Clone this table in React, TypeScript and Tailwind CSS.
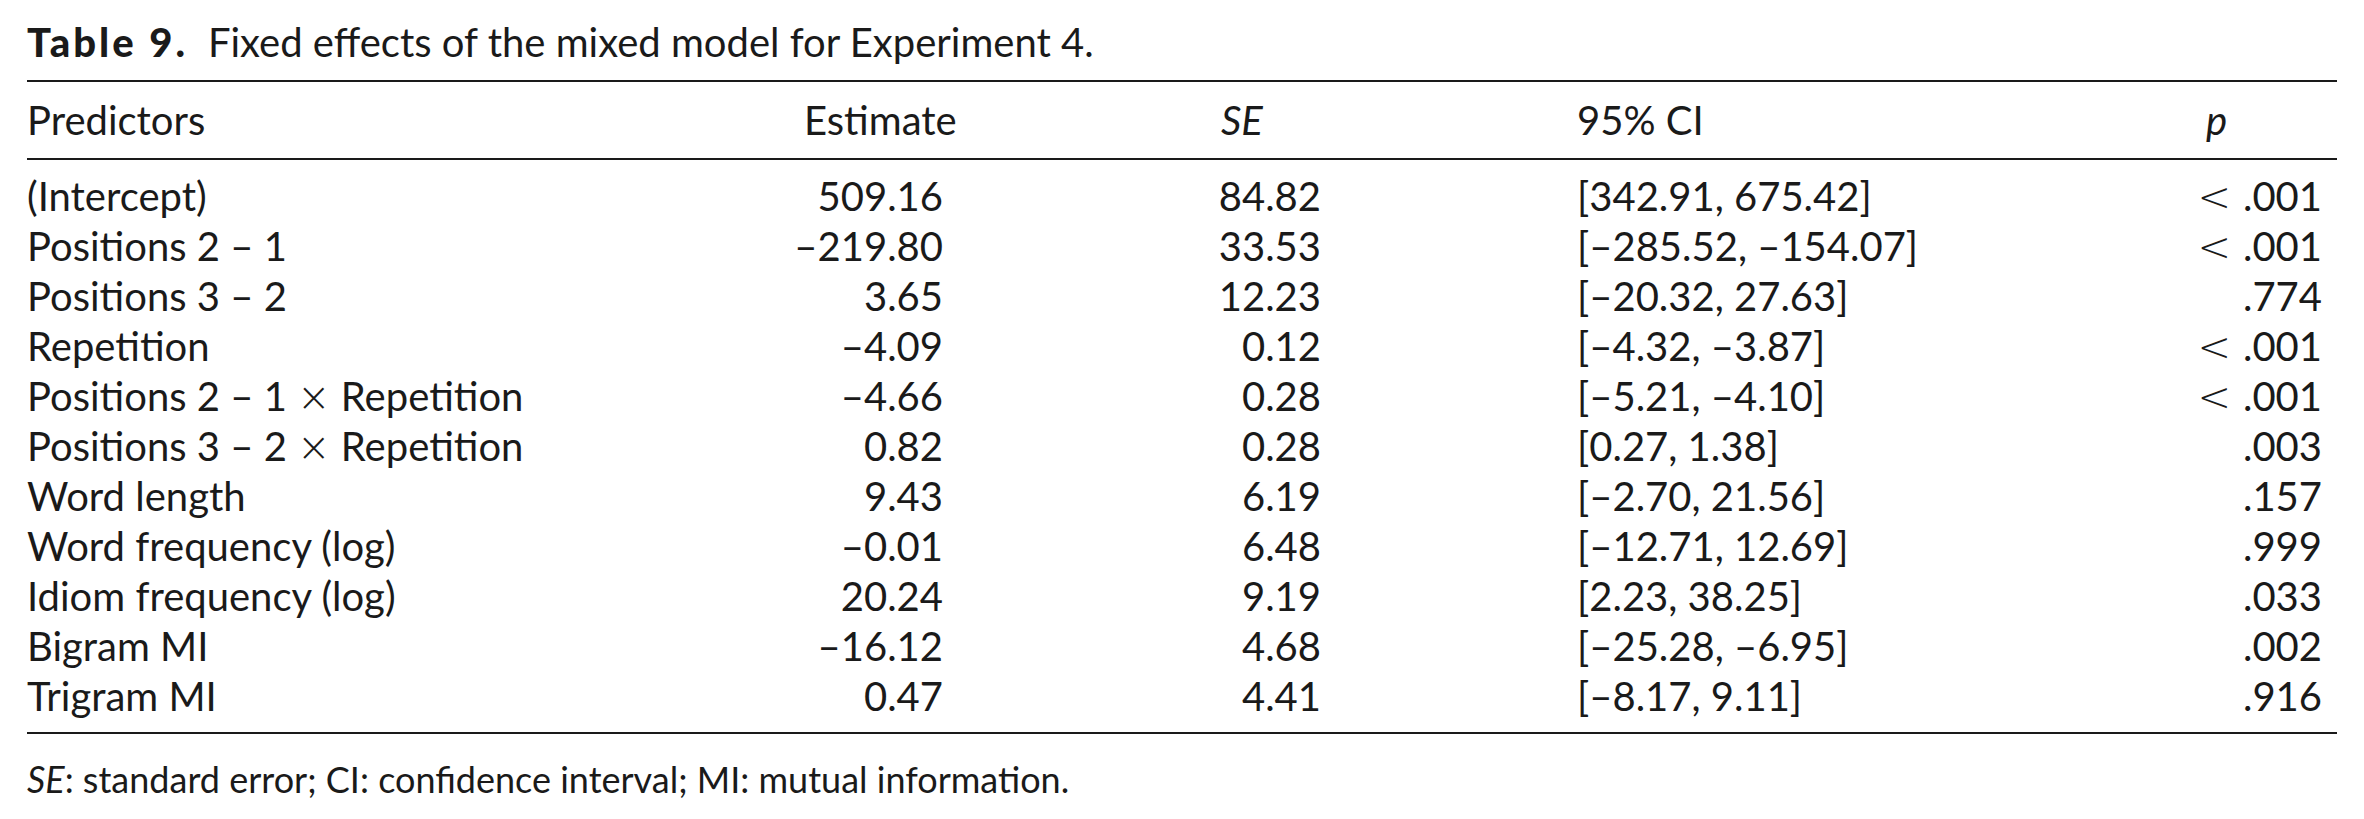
const rows: [string, string, string, string, string][] = [
  ['(Intercept)', '509.16', '84.82', '[342.91, 675.42]', '<.001'],
  ['Positions 2 – 1', '–219.80', '33.53', '[–285.52, –154.07]', '<.001'],
  ['Positions 3 – 2', '3.65', '12.23', '[–20.32, 27.63]', '.774'],
  ['Repetition', '–4.09', '0.12', '[–4.32, –3.87]', '<.001'],
  ['Positions 2 – 1 × Repetition', '–4.66', '0.28', '[–5.21, –4.10]', '<.001'],
  ['Positions 3 – 2 × Repetition', '0.82', '0.28', '[0.27, 1.38]', '.003'],
  ['Word length', '9.43', '6.19', '[–2.70, 21.56]', '.157'],
  ['Word frequency (log)', '–0.01', '6.48', '[–12.71, 12.69]', '.999'],
  ['Idiom frequency (log)', '20.24', '9.19', '[2.23, 38.25]', '.033'],
  ['Bigram MI', '–16.12', '4.68', '[–25.28, –6.95]', '.002'],
  ['Trigram MI', '0.47', '4.41', '[–8.17, 9.11]', '.916'],
]

function Rule() {
  return <div className="h-[2px] bg-[#1a1a1a]" />
}

// math symbols (<, ×) are thinner and wider than the text face
function Sym({ children, className = '' }: { children: string; className?: string }) {
  return <span className={`font-['DejaVu_Sans',sans-serif] font-extralight ${className}`}>{children}</span>
}

function Predictor({ name }: { name: string }) {
  const parts = name.split(' × ')
  if (parts.length === 1) return <>{name}</>
  return (
    <>
      {parts[0]} <Sym>×</Sym> {parts[1]}
    </>
  )
}

function PValue({ value }: { value: string }) {
  if (!value.startsWith('<')) return <>{value}</>
  return (
    <>
      <Sym className="mr-[12px]">&lt;</Sym>
      {value.slice(1)}
    </>
  )
}

export default function App() {
  return (
    <div className="min-h-screen w-[2364px] bg-white pl-[27px] pr-[27px] pt-[22px] text-[#1a1a1a] font-['Lato',sans-serif] text-[40px]">
      <div className="h-[40px] leading-[40px] whitespace-nowrap">
        <span className="font-black tracking-[0.075em]">Table 9.</span>
        <span className="ml-[20px]">Fixed effects of the mixed model for Experiment 4.</span>
      </div>

      <div className="mt-[18px]">
        <Rule />
        <div className="grid h-[76px] grid-cols-[777px_417px_356px_629px_131px] items-center leading-[40px]">
          <div>Predictors</div>
          <div>Estimate</div>
          <div className="italic">SE</div>
          <div>95% CI</div>
          <div className="italic">p</div>
        </div>
        <Rule />

        <div className="py-[11px]">
          {rows.map(([name, est, se, ci, p]) => (
            <div
              key={name}
              className="grid h-[50px] grid-cols-[753px_163px_378px_256px_617px_128px_15px] items-center leading-[40px] whitespace-nowrap"
            >
              <div>
                <Predictor name={name} />
              </div>
              <div className="text-right">{est}</div>
              <div className="text-right">{se}</div>
              <div />
              <div>{ci}</div>
              <div className="text-right">
                <PValue value={p} />
              </div>
              <div />
            </div>
          ))}
        </div>
        <Rule />
      </div>

      <div className="mt-[25px] h-[40px] text-[36px] leading-[40px]">
        <span className="italic">SE</span>: standard error; CI: confidence interval; MI: mutual information.
      </div>
    </div>
  )
}
